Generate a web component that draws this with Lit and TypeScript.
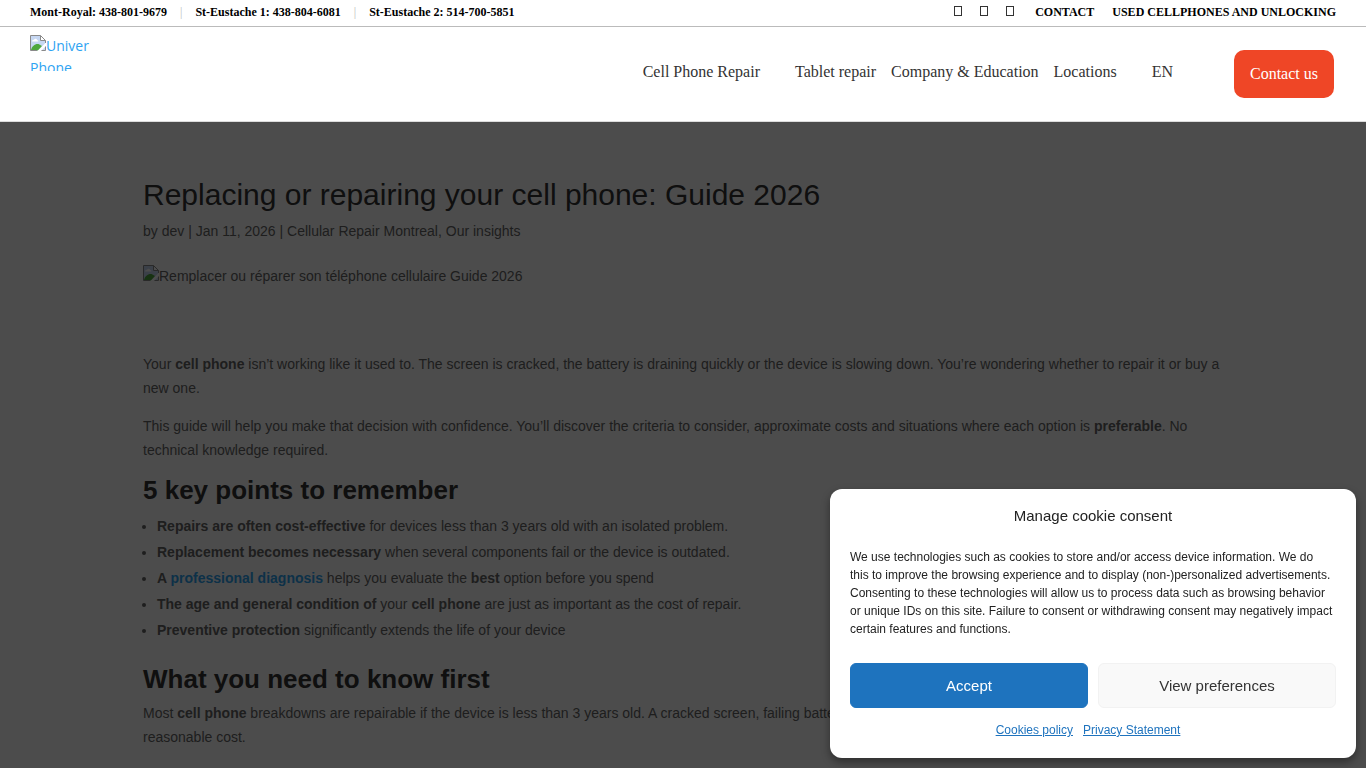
import { LitElement, html, css, svg } from "lit";
import { customElement } from "lit/decorators.js";

const phones = [
  "Mont-Royal: 438-801-9679",
  "St-Eustache 1: 438-804-6081",
  "St-Eustache 2: 514-700-5851",
];

const socials = ["Facebook", "Instagram", "Google"];

const glyphBox = svg`<rect x="0.5" y="0.5" width="7" height="9" fill="none" stroke="currentColor"/>`;

const missingPicture = html`<svg class="missing" viewBox="0 0 16 16" aria-hidden="true">
  <path d="M0.5 0.5h10l5 5v10h-15z" fill="#c6d7f2" />
  <path d="M2 6.5c0-1.200 1-2 2-1.800c.6-1.200 2.600-1.200 3 .2c1 0 1.500 .8 1.300 1.600z" fill="#fff" />
  <path d="M1 15c1-4 4-6.500 7.500-6l3.500 2-4 4.500H1z" fill="#4fa83d" />
  <path d="M16 7.500L7.500 16H11l5-5z" fill="#fff" />
  <path d="M10.500 0.500v5h5" fill="#fff" stroke="#8a8a8a" />
  <path d="M7 15.500H0.500V0.500h10l5 5V8M15.500 11.500v4h-4" fill="none" stroke="#8a8a8a" />
</svg>`;

@customElement("site-header")
export class SiteHeader extends LitElement {
  static styles = css`
    :host {
      display: block;
      position: relative;
      z-index: 2;
      background: #fff;
      font-family: "Liberation Serif", "Times New Roman", serif;
      border-bottom: 1px solid #dcdcdc;
    }
    a {
      color: inherit;
      text-decoration: none;
    }
    .top {
      display: flex;
      justify-content: space-between;
      align-items: center;
      height: 24px;
      padding: 0 30px 2px;
      border-bottom: 1px solid #bbb;
      font-size: 12px;
      font-weight: 700;
      line-height: 24px;
      color: #000;
    }
    .phones,
    .links,
    .menu {
      display: flex;
      align-items: center;
      margin: 0;
      padding: 0;
      list-style: none;
    }
    .phones li + li::before {
      content: "|";
      margin: 0 13px;
      color: #bbb;
      font-weight: 400;
    }
    .links {
      gap: 18px;
    }
    .social {
      display: flex;
      gap: 18px;
      margin-right: 3px;
      padding-bottom: 2px;
      color: #333;
    }
    .social a {
      display: flex;
    }
    .box {
      width: 8px;
      height: 10px;
    }
    .bar {
      display: flex;
      justify-content: space-between;
      align-items: flex-start;
      padding: 8px 32px 23px 30px;
    }
    .logo {
      width: 60px;
      height: 36px;
      overflow: hidden;
      font-family: "Open Sans", sans-serif;
      font-size: 14px;
      line-height: 22px;
      color: #2ea3f2;
    }
    .missing {
      width: 16px;
      height: 16px;
      vertical-align: baseline;
    }
    .right {
      display: flex;
      align-items: flex-start;
      padding-top: 15px;
      gap: 61px;
    }
    .menu {
      padding-top: 10px;
      gap: 15px;
      font-size: 16px;
      line-height: 24px;
      color: #333;
    }
    .wide {
      margin-right: 20px;
    }
    .cta {
      padding: 12px 16px;
      border-radius: 10px;
      background: #ef4626;
      color: #fff;
      font-size: 16px;
      font-weight: 500;
      line-height: 24px;
    }
  `;

  render() {
    return html`
      <div class="top">
        <ul class="phones">
          ${phones.map((p) => html`<li><a href="#">${p}</a></li>`)}
        </ul>
        <div class="links">
          <span class="social">
            ${socials.map(
              (s) => html`<a href="#" aria-label=${s}><svg class="box" viewBox="0 0 8 10">${glyphBox}</svg></a>`
            )}
          </span>
          <a href="#">CONTACT</a>
          <a href="#">USED CELLPHONES AND UNLOCKING</a>
        </div>
      </div>
      <div class="bar">
        <a class="logo" href="#">${missingPicture}Univer Phone</a>
        <div class="right">
          <nav>
            <ul class="menu">
              <li class="wide"><a href="#">Cell Phone Repair</a></li>
              <li><a href="#">Tablet repair</a></li>
              <li><a href="#">Company &amp; Education</a></li>
              <li class="wide"><a href="#">Locations</a></li>
              <li><a href="#">EN</a></li>
            </ul>
          </nav>
          <a class="cta" href="#">Contact us</a>
        </div>
      </div>
    `;
  }
}

@customElement("blog-post")
export class BlogPost extends LitElement {
  static styles = css`
    :host {
      display: block;
      max-width: 1080px;
      width: 80%;
      margin: 0 auto;
      padding-top: 58px;
      font-size: 14px;
      line-height: 24px;
      color: #666;
    }
    a {
      color: inherit;
      text-decoration: none;
    }
    h1,
    h2 {
      margin: 0;
      color: #333;
    }
    h1 {
      padding-bottom: 9px;
      font-size: 30px;
      line-height: 30px;
      font-weight: 500;
    }
    h2 {
      padding-bottom: 8px;
      font-size: 26px;
      line-height: 28px;
      font-weight: 700;
    }
    p {
      margin: 0;
      padding-bottom: 14px;
    }
    .meta {
      padding-bottom: 21px;
    }
    .picture {
      margin-bottom: 64px;
    }
    .missing {
      width: 16px;
      height: 16px;
      vertical-align: baseline;
    }
    ul {
      margin: 0;
      padding: 1px 0 22px 14px;
      line-height: 26px;
      list-style: disc;
    }
    .inline {
      color: #2ea3f2;
    }
  `;

  render() {
    return html`
      <article>
        <h1>Replacing or repairing your cell phone: Guide 2026</h1>
        <p class="meta">
          by <a href="#">dev</a> | Jan 11, 2026 | <a href="#">Cellular Repair Montreal</a>, <a href="#">Our insights</a>
        </p>
        <div class="picture">${missingPicture}Remplacer ou réparer son téléphone cellulaire Guide 2026</div>
        <p>
          Your <strong>cell phone</strong> isn’t working like it used to. The screen is cracked, the battery is
          draining quickly or the device is slowing down. You’re wondering whether to repair it or buy a new one.
        </p>
        <p>
          This guide will help you make that decision with confidence. You’ll discover the criteria to consider,
          approximate costs and situations where each option is <strong>preferable</strong>. No technical knowledge
          required.
        </p>
        <h2>5 key points to remember</h2>
        <ul>
          <li><strong>Repairs are often cost-effective</strong> for devices less than 3 years old with an isolated problem.</li>
          <li><strong>Replacement becomes necessary</strong> when several components fail or the device is outdated.</li>
          <li>
            <strong>A <a class="inline" href="#">professional diagnosis</a></strong> helps you evaluate the
            <strong>best</strong> option before you spend
          </li>
          <li>
            <strong>The age and general condition of</strong> your <strong>cell phone</strong> are just as important
            as the cost of repair.
          </li>
          <li><strong>Preventive protection</strong> significantly extends the life of your device</li>
        </ul>
        <h2>What you need to know first</h2>
        <p>
          Most <strong>cell phone</strong> breakdowns are repairable if the device is less than 3 years old. A cracked
          screen, failing battery or damaged charging port can usually be replaced at a reasonable cost.
        </p>
      </article>
    `;
  }
}

@customElement("cookie-consent")
export class CookieConsent extends LitElement {
  static styles = css`
    :host {
      display: block;
      position: fixed;
      z-index: 3;
      right: 10px;
      bottom: 10px;
      box-sizing: border-box;
      width: 526px;
      max-width: calc(100vw - 20px);
      padding: 15px 20px;
      border-radius: 12px;
      background: #fff;
      box-shadow: 0 4px 8px rgba(0, 0, 0, 0.4);
      color: #222;
      font-size: 12px;
      line-height: 18px;
    }
    h2 {
      margin: 0 0 20px;
      font-size: 15px;
      line-height: 24px;
      font-weight: 400;
      text-align: center;
    }
    p {
      margin: 0 0 25px;
      padding-right: 2px;
    }
    .buttons {
      display: grid;
      grid-template-columns: 1fr 1fr;
      gap: 10px;
    }
    button {
      height: 45px;
      border: 1px solid #f2f2f2;
      border-radius: 6px;
      background: #f9f9f9;
      color: #333;
      font: 400 15px/20px "Liberation Sans", Arial, sans-serif;
    }
    .accept {
      border-color: #1e73be;
      background: #1e73be;
      color: #fff;
      font-weight: 500;
    }
    .documents {
      display: flex;
      justify-content: center;
      padding: 13px 0 4px;
    }
    .documents a {
      margin-right: 10px;
      color: #1e73be;
    }
  `;

  render() {
    return html`
      <section role="dialog" aria-labelledby="title">
        <h2 id="title">Manage cookie consent</h2>
        <p>
          We use technologies such as cookies to store and/or access device information. We do this to improve the
          browsing experience and to display (non-)personalized advertisements. Consenting to these technologies will
          allow us to process data such as browsing behavior or unique IDs on this site. Failure to consent or
          withdrawing consent may negatively impact certain features and functions.
        </p>
        <div class="buttons">
          <button class="accept" type="button">Accept</button>
          <button type="button">View preferences</button>
        </div>
        <div class="documents">
          <a href="#">Cookies policy</a>
          <a href="#">Privacy Statement</a>
        </div>
      </section>
    `;
  }
}

@customElement("app-root")
export class AppRoot extends LitElement {
  static styles = css`
    :host {
      display: block;
      height: 100vh;
      overflow: hidden;
      background: #fff;
      font-family: "Liberation Sans", Arial, sans-serif;
    }
    .shade {
      position: fixed;
      inset: 0;
      z-index: 1;
      background: rgba(0, 0, 0, 0.7);
    }
  `;

  render() {
    return html`
      <site-header></site-header>
      <main><blog-post></blog-post></main>
      <div class="shade"></div>
      <cookie-consent></cookie-consent>
    `;
  }
}
